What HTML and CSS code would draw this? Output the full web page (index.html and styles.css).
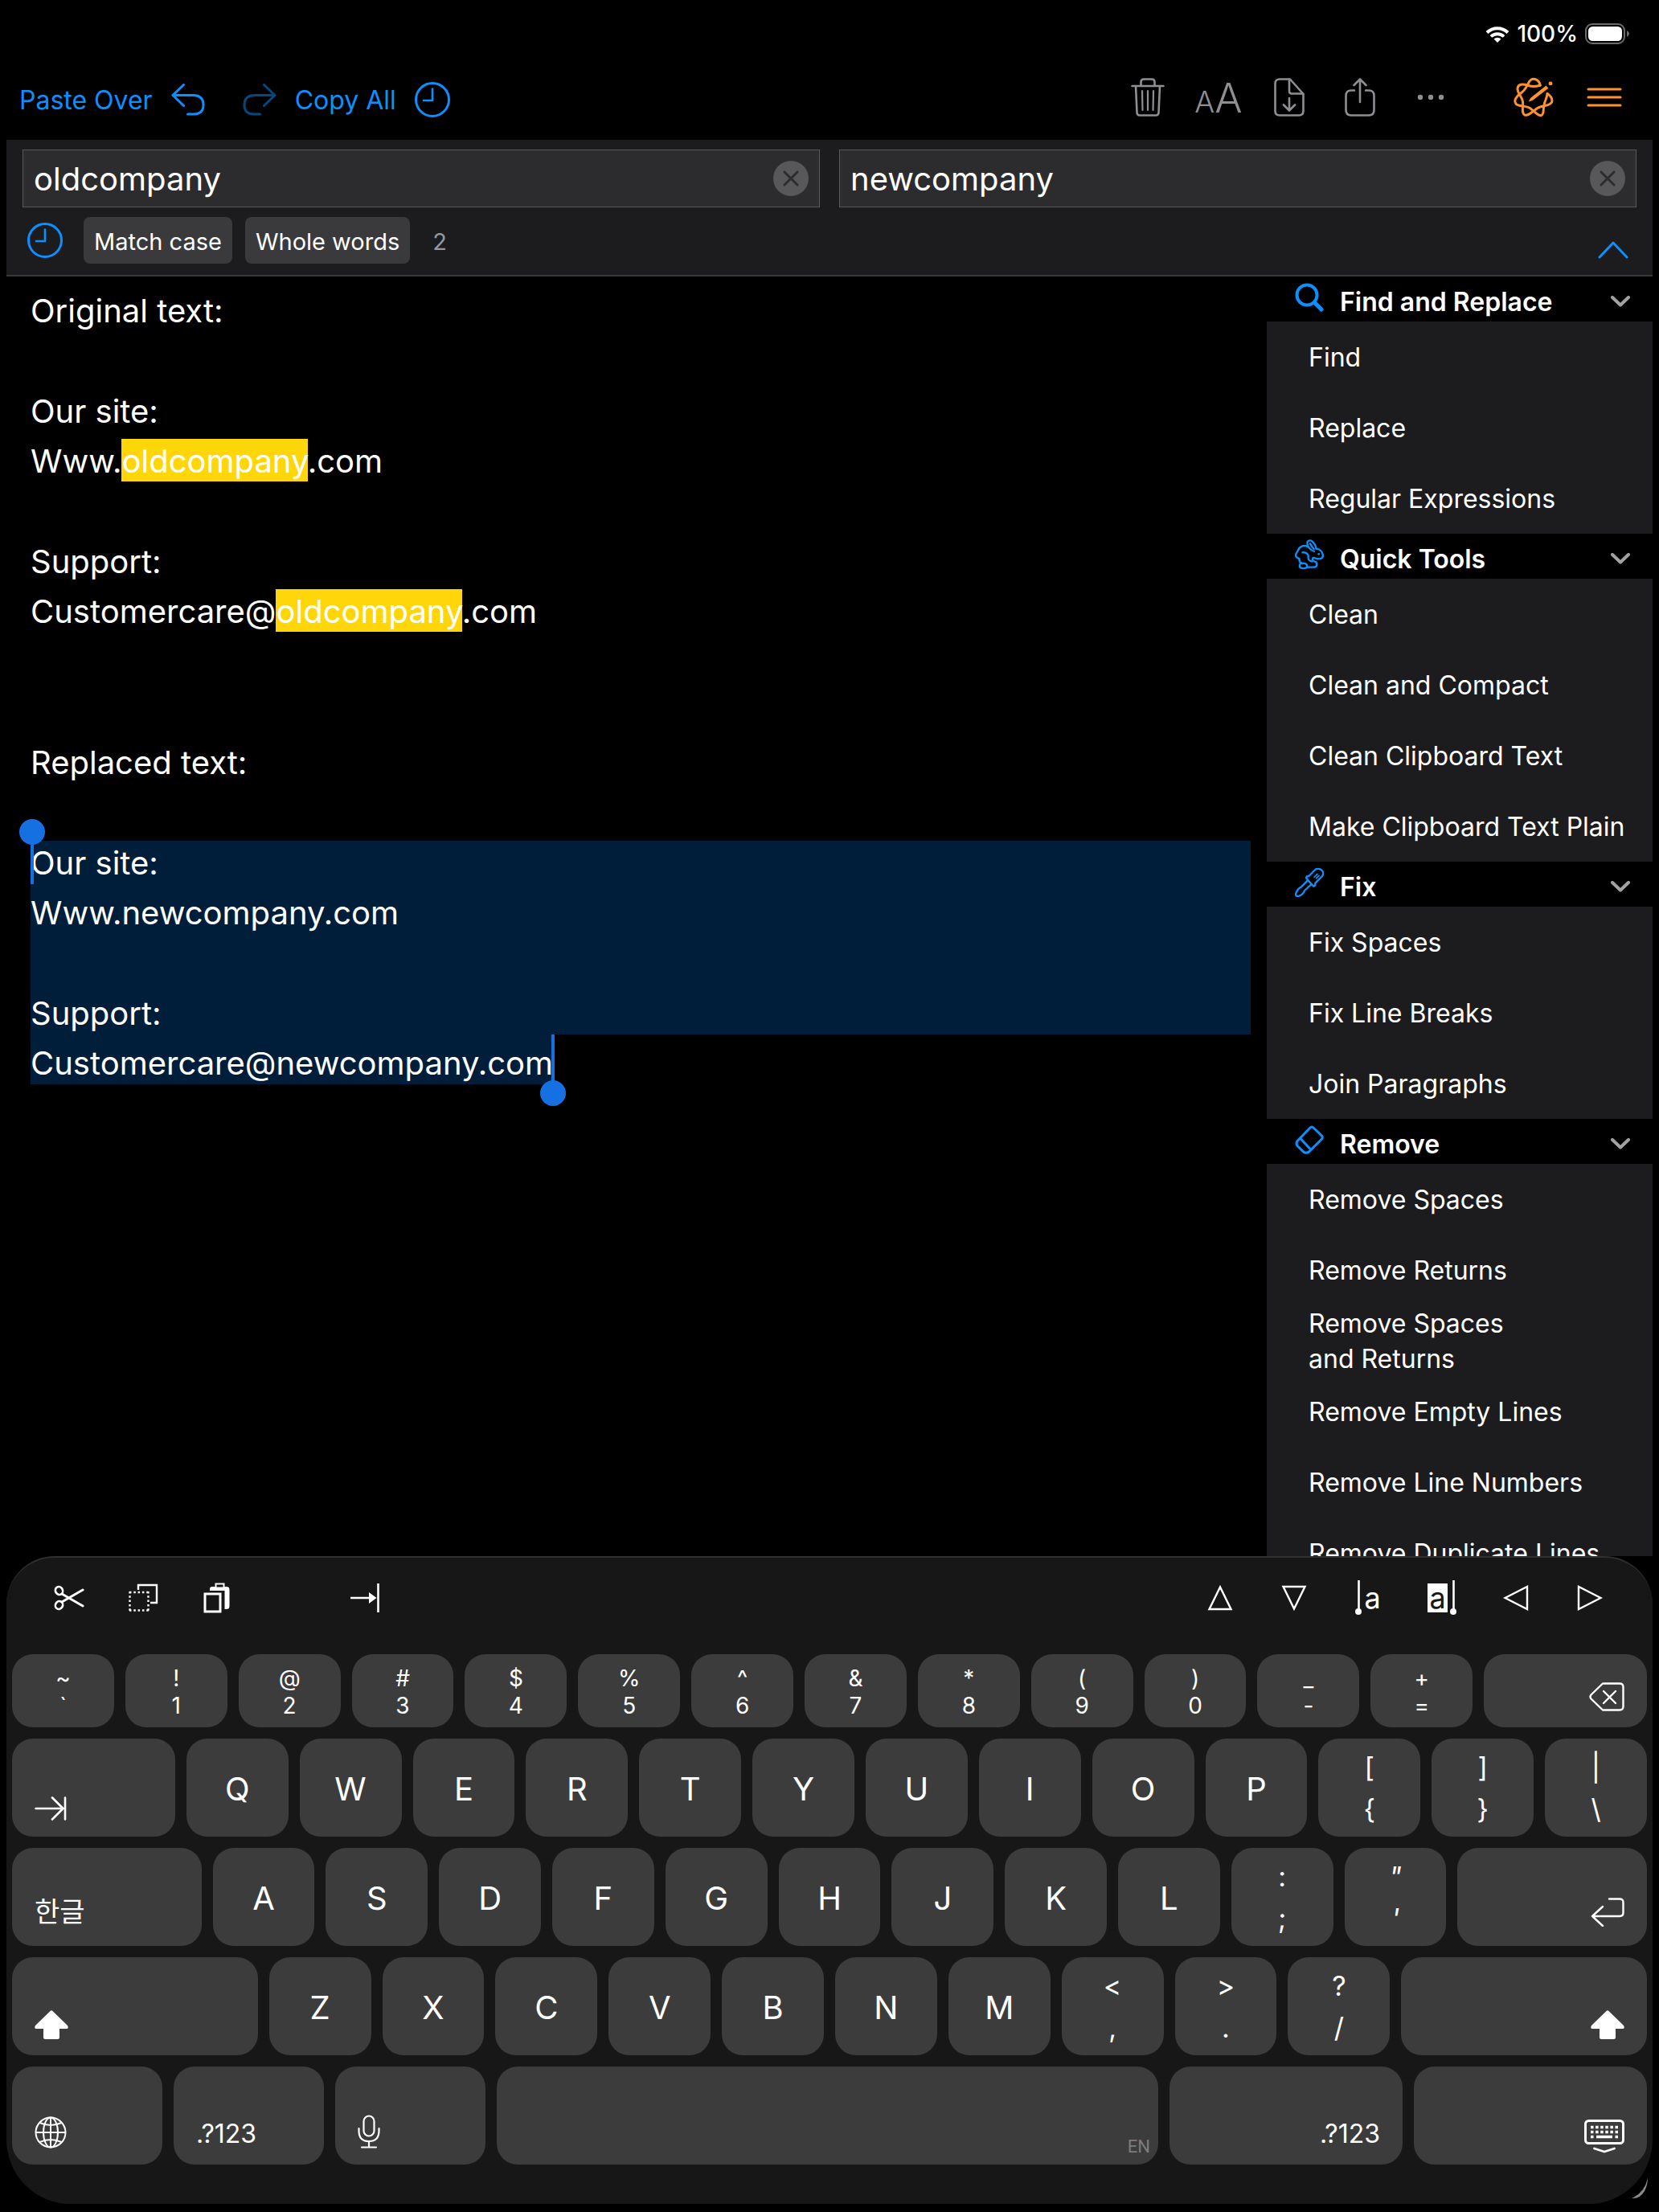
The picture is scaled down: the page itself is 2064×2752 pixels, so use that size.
FILE: index.html
```html
<!DOCTYPE html>
<html lang="en">
<head>
  <meta charset="UTF-8" />
  <meta name="viewport" content="width=device-width, initial-scale=1.0" />
  <title>Text Editor</title>
  <link rel="stylesheet" href="styles.css">
</head>
<body>
  <!-- shared icons -->
  <svg class="symbols" aria-hidden="true">
    <symbol id="clock" viewBox="0 0 44 44">
      <circle cx="22" cy="22" r="20.5" fill="none" stroke="currentColor" stroke-width="3" />
      <path d="M22 8.500V23H11" fill="none" stroke="currentColor" stroke-width="2.600" stroke-linecap="round" stroke-linejoin="round" />
    </symbol>
    <symbol id="clear" viewBox="0 0 44 44">
      <circle cx="22" cy="22" r="22" fill="#58585a" />
      <path d="M14 14L30 30M30 14L14 30" stroke="#2c2c2e" stroke-width="3" stroke-linecap="round" />
    </symbol>
    <symbol id="chevron" viewBox="0 0 24 14">
      <path d="M2 2L12 11.500L22 2" fill="none" stroke="#a2a2a4" stroke-width="4" stroke-linecap="round" stroke-linejoin="round" />
    </symbol>
    <symbol id="shift" viewBox="0 0 42 36">
      <path d="M19.500 1Q21 -0.500 22.500 1L41 19Q43 23 39.500 23H31V33.500Q31 36 28.500 36H13.500Q11 36 11 33.500V23H2.500Q-1 23 1 19Z" fill="#fff" />
    </symbol>
  </svg>

  <div class="status-bar">
    <svg width="30" height="21" viewBox="0 0 30 21">
      <path d="M2 8.500A18.500 18.500 0 0 1 28 8.500" fill="none" stroke="#fff" stroke-width="4" />
      <path d="M7 13.500A11.500 11.500 0 0 1 23 13.500" fill="none" stroke="#fff" stroke-width="3.800" />
      <path d="M10.500 16.500A6.500 6.500 0 0 1 19.500 16.500L15 21Z" fill="#fff" />
    </svg>
    <span>100%</span>
    <svg width="56" height="26" viewBox="0 0 56 26">
      <rect x="1" y="1" width="48" height="24" rx="8" fill="none" stroke="#6c6c6c" stroke-width="2" />
      <rect x="4" y="4" width="42" height="18" rx="5.500" fill="#fff" />
      <path d="M52 9Q55 10.500 55 13T52 17Z" fill="#6c6c6c" />
    </svg>
  </div>

  <header class="toolbar">
    <div class="toolbar-left">
      <button class="text-button">Paste Over</button>
      <button class="undo" aria-label="Undo">
        <svg width="42" height="40" viewBox="0 0 42 40" fill="none" stroke="currentColor" stroke-width="3" stroke-linecap="round" stroke-linejoin="round">
          <path d="M15.500 1.500L2 14.500L15.500 27.500M2 14.500H27Q40 14.500 40 26.500T27 38H20.500" />
        </svg>
      </button>
      <button class="redo" aria-label="Redo">
        <svg width="42" height="40" viewBox="0 0 42 40" fill="none" stroke="currentColor" stroke-width="3" stroke-linecap="round" stroke-linejoin="round">
          <path d="M26.500 1.500L40 14.500L26.500 27.500M40 14.500H15Q2 14.500 2 26.500T15 38H21.500" />
        </svg>
      </button>
      <button class="text-button">Copy All</button>
      <button aria-label="History"><svg width="44" height="44"><use href="#clock" /></svg></button>
    </div>
    <div class="toolbar-right">
      <button class="tool" aria-label="Delete">
        <svg width="42" height="48" viewBox="0 0 42 48" fill="none" stroke="currentColor" stroke-width="2.6" stroke-linecap="round" stroke-linejoin="round">
          <path d="M1.500 10H40.500M12.500 10V5Q12.500 1.500 16 1.500H26Q29.500 1.500 29.500 5V10M6 10L7.500 43Q7.700 46.500 11 46.500H31Q34.300 46.500 34.500 43L36 10" />
          <path d="M14 16L14.500 40M21 16V40M28 16L27.500 40" stroke-width="2.200" />
        </svg>
      </button>
      <button class="tool text-size" aria-label="Text size"><span class="small-a">A</span><span class="big-a">A</span></button>
      <button class="tool" aria-label="Download">
        <svg width="38" height="48" viewBox="0 0 38 48" fill="none" stroke="currentColor" stroke-width="2.6" stroke-linecap="round" stroke-linejoin="round">
          <path d="M19 1.500H7Q1.500 1.500 1.500 7V41Q1.500 46.500 7 46.500H31Q36.500 46.500 36.500 41V20L20 1.500Z" />
          <path d="M19 2V16.500Q19 19.500 22 19.500H36M19 25V40M12 33.500L19 40.500L26 33.500" />
        </svg>
      </button>
      <button class="tool" aria-label="Share">
        <svg width="38" height="48" viewBox="0 0 38 48" fill="none" stroke="currentColor" stroke-width="2.6" stroke-linecap="round" stroke-linejoin="round">
          <path d="M12 15.500H8Q1.500 15.500 1.500 22V40Q1.500 46.500 8 46.500H30Q36.500 46.500 36.500 40V22Q36.500 15.500 30 15.500H26" />
          <path d="M19 30V1.500M11.500 9L19 1.500L26.500 9" />
        </svg>
      </button>
      <button class="tool" aria-label="More">
        <svg width="36" height="8" viewBox="0 0 36 8" fill="currentColor"><circle cx="5" cy="4" r="3.2" /><circle cx="18" cy="4" r="3.2" /><circle cx="31" cy="4" r="3.2" /></svg>
      </button>
      <button class="tool accent edit" aria-label="Edit tools">
        <svg width="50" height="50" viewBox="-4 -4 152 152" fill="none" stroke="currentColor" stroke-width="9" stroke-linecap="round" stroke-linejoin="round">
          <path d="M97 27C94 8 70 -8 56 12C46 28 44 42 24 56C4 70 -4 86 6 98C18 108 45 102 62 116C76 126 88 143 101 141C113 137 107 116 112 98C115 86 122 76 124 58" />
          <path d="M97 27C80 31 64 34 50 27C28 20 12 22 11 40C12 60 28 68 31 88C34 108 24 130 38 139C55 145 72 120 90 111C110 102 132 106 141 90C144 78 136 66 124 58" />
          <path d="M53 89L60 75L119 28L128 38L68 84Z" fill="currentColor" stroke="none" />
          <circle cx="136" cy="20" r="7.5" fill="currentColor" stroke="none" />
        </svg>
      </button>
      <button class="tool accent" aria-label="Menu">
        <svg width="44" height="24" viewBox="0 0 44 24" fill="none" stroke="currentColor" stroke-width="3" stroke-linecap="round"><path d="M2 2H42M2 12H42M2 22H42" /></svg>
      </button>
    </div>
  </header>

  <form class="find-panel" onsubmit="return false">
    <div class="fields">
      <div class="field">
        <input type="text" aria-label="Find" value="oldcompany" />
        <button type="button" aria-label="Clear find"><svg width="44" height="44"><use href="#clear" /></svg></button>
      </div>
      <div class="field">
        <input type="text" aria-label="Replace" value="newcompany" />
        <button type="button" aria-label="Clear replace"><svg width="44" height="44"><use href="#clear" /></svg></button>
      </div>
    </div>
    <div class="options">
      <button type="button" class="history" aria-label="Search history"><svg width="44" height="44"><use href="#clock" /></svg></button>
      <button type="button" class="option">Match case</button>
      <button type="button" class="option">Whole words</button>
      <output class="count">2</output>
      <button type="button" class="collapse" aria-label="Collapse">
        <svg width="38" height="22" viewBox="0 0 38 22" fill="none" stroke="currentColor" stroke-width="3" stroke-linecap="round" stroke-linejoin="round"><path d="M2 20L19 2L36 20" /></svg>
      </button>
    </div>
  </form>

  <main class="main">
    <div class="editor" role="textbox" aria-multiline="true" aria-label="Text">
      <div class="line">Original text:</div>
      <div class="line blank"></div>
      <div class="line">Our site:</div>
      <div class="line">Www.<mark>oldcompany</mark>.com</div>
      <div class="line blank"></div>
      <div class="line">Support:</div>
      <div class="line">Customercare@<mark>oldcompany</mark>.com</div>
      <div class="line blank"></div>
      <div class="line blank"></div>
      <div class="line">Replaced text:</div>
      <div class="line blank"></div>
      <div class="selection">
        <div class="selected-block">
          <div class="line">Our site:</div>
          <div class="line">Www.newcompany.com</div>
          <div class="line blank"></div>
          <div class="line">Support:</div>
        </div>
        <div class="line selected-last">Customercare@newcompany.com</div>
      </div>
    </div>

    <aside class="sidebar">
      <button class="section-title">
        <svg width="36" height="36" viewBox="0 0 36 36" fill="none" stroke="currentColor" stroke-linecap="round"><circle cx="15" cy="15" r="12.500" stroke-width="4" /><path d="M24.500 24.500L33 33" stroke-width="5" /></svg>
        <span>Find and Replace</span>
        <svg class="chevron" width="24" height="14"><use href="#chevron" /></svg>
      </button>
      <button class="item">Find</button>
      <button class="item">Replace</button>
      <button class="item">Regular Expressions</button>

      <button class="section-title">
        <svg width="36" height="38" viewBox="0 0 108 112" fill="none" stroke="currentColor" stroke-width="7" stroke-linecap="round" stroke-linejoin="round">
          <path d="M50 28C36 18 18 24 12 40C10 46 2 52 3 60C4 68 12 68 17 72C14 82 20 86 28 90" />
          <path d="M72 44C60 40 46 26 46 14C46 2 58 1 64 6C74 14 78 24 80 34M57 15C62 24 66 30 71 35" />
          <path d="M80 34C94 36 104 46 105 60C104 70 94 72 86 72C78 72 74 66 68 68C64 74 66 80 74 82C84 84 86 102 72 103H46" />
          <path d="M28 48C42 46 52 54 50 66C48 74 54 80 64 81" />
          <path d="M28 88C16 86 14 104 24 106C34 109 48 106 46 98C44 90 36 88 28 88Z" />
          <circle cx="89" cy="54" r="4" fill="currentColor" stroke="none" />
        </svg>
        <span>Quick Tools</span>
        <svg class="chevron" width="24" height="14"><use href="#chevron" /></svg>
      </button>
      <button class="item">Clean</button>
      <button class="item">Clean and Compact</button>
      <button class="item">Clean Clipboard Text</button>
      <button class="item">Make Clipboard Text Plain</button>

      <button class="section-title">
        <svg width="36" height="36" viewBox="0 0 108 108" fill="none" stroke="currentColor" stroke-width="7" stroke-linecap="round" stroke-linejoin="round">
          <path d="M46 42L42 36L46 30L52 30L76 6C82 0 94 2 100 8C108 14 106 26 102 30L76 56V64L70 68L64 62Z" />
          <path d="M48 46L24 70C12 74 8 84 3 96C2 102 6 106 12 105C22 102 32 98 36 84L62 60" />
          <path d="M72 34L84 22M80 38L90 28" stroke-width="5" />
        </svg>
        <span>Fix</span>
        <svg class="chevron" width="24" height="14"><use href="#chevron" /></svg>
      </button>
      <button class="item">Fix Spaces</button>
      <button class="item">Fix Line Breaks</button>
      <button class="item">Join Paragraphs</button>

      <button class="section-title">
        <svg width="36" height="36" viewBox="0 0 36 36" fill="none" stroke="currentColor" stroke-width="3" stroke-linejoin="round">
          <path d="M19 3Q21 1 23 3L33.500 13Q35 15 33.500 17L18 32.500Q14 36 10 32.500L3.500 26Q0.500 22.500 3.500 19ZM6.500 16L19.500 30" />
        </svg>
        <span>Remove</span>
        <svg class="chevron" width="24" height="14"><use href="#chevron" /></svg>
      </button>
      <button class="item">Remove Spaces</button>
      <button class="item">Remove Returns</button>
      <button class="item">Remove Spaces<br />and Returns</button>
      <button class="item">Remove Empty Lines</button>
      <button class="item">Remove Line Numbers</button>
      <button class="item">Remove Duplicate Lines</button>
    </aside>
  </main>

  <section class="keyboard" aria-label="Keyboard">
    <div class="key-tools">
      <button aria-label="Cut">
        <svg width="38" height="32" viewBox="0 0 38 32" fill="none" stroke="#fff" stroke-width="2.6" stroke-linecap="round">
          <ellipse cx="6.500" cy="7" rx="4.500" ry="5" transform="rotate(-30 6.500 7)" /><ellipse cx="6.500" cy="25" rx="4.500" ry="5" transform="rotate(30 6.500 25)" />
          <path d="M10 11L36 26M10 21L36 6" stroke-width="3" />
        </svg>
      </button>
      <button aria-label="Copy">
        <svg width="38" height="36" viewBox="0 0 38 36" fill="none" stroke="#fff" stroke-width="2.4">
          <path d="M13 8V2H36V24H28" />
          <path d="M2 11H27M2 33.500H27M2.500 10V34M25.500 10V34" stroke-dasharray="2.500 2.800" />
        </svg>
      </button>
      <button aria-label="Paste">
        <svg width="34" height="38" viewBox="0 0 34 38" fill="none" stroke="#fff">
          <path d="M8 10V8Q8 5 11 5H29Q32.500 5 32.500 9V29Q32.500 33 29 33H26.500V10Z" fill="#fff" stroke="none" />
          <rect x="15.500" y="1.500" width="10" height="5" fill="#171717" stroke-width="2" />
          <rect x="2" y="14" width="19" height="22" fill="#171717" stroke-width="3" />
        </svg>
      </button>
      <button class="tab-tool" aria-label="Insert tab">
        <svg width="36" height="38" viewBox="0 0 36 38"><path d="M0 19H24M34.500 1V37" stroke="#fff" stroke-width="2.600" fill="none" /><path d="M23 12L32.500 19L23 26Z" fill="#fff" /></svg>
      </button>
      <span class="spacer"></span>
      <button aria-label="Up"><svg width="32" height="32" viewBox="0 0 32 32" fill="none" stroke="#fff" stroke-width="2.4"><path d="M16 2.500L29.500 30H2.500Z" /></svg></button>
      <button aria-label="Down"><svg width="32" height="32" viewBox="0 0 32 32" fill="none" stroke="#fff" stroke-width="2.4"><path d="M16 29.500L29.500 2H2.500Z" /></svg></button>
      <button class="caret-tool" aria-label="Select left"><svg width="8" height="44" viewBox="0 0 8 44"><path d="M4.500 0V38" stroke="#fff" stroke-width="2.600" /><circle cx="4" cy="39" r="4" fill="#fff" /></svg><span>a</span></button>
      <button class="caret-tool" aria-label="Select right"><span class="inverse">a</span><svg width="8" height="44" viewBox="0 0 8 44"><path d="M4.500 0V38" stroke="#fff" stroke-width="2.600" /><circle cx="4" cy="39" r="4" fill="#fff" /></svg></button>
      <button aria-label="Left"><svg width="32" height="32" viewBox="0 0 32 32" fill="none" stroke="#fff" stroke-width="2.4"><path d="M2.500 16L30 2V30Z" /></svg></button>
      <button aria-label="Right"><svg width="32" height="32" viewBox="0 0 32 32" fill="none" stroke="#fff" stroke-width="2.4"><path d="M29.500 16L2 2V30Z" /></svg></button>
    </div>

    <div class="row number-row">
      <button class="key"><span>~</span><span>`</span></button>
      <button class="key"><span>!</span><span>1</span></button>
      <button class="key"><span>@</span><span>2</span></button>
      <button class="key"><span>#</span><span>3</span></button>
      <button class="key"><span>$</span><span>4</span></button>
      <button class="key"><span>%</span><span>5</span></button>
      <button class="key"><span>^</span><span>6</span></button>
      <button class="key"><span>&amp;</span><span>7</span></button>
      <button class="key"><span>*</span><span>8</span></button>
      <button class="key"><span>(</span><span>9</span></button>
      <button class="key"><span>)</span><span>0</span></button>
      <button class="key"><span>_</span><span>-</span></button>
      <button class="key"><span>+</span><span>=</span></button>
      <button class="key tab right" aria-label="Backspace">
        <svg width="44" height="36" viewBox="0 0 44 36" fill="none" stroke="#fff" stroke-width="2.4" stroke-linecap="round" stroke-linejoin="round"><path d="M17 1.500H38Q42.500 1.500 42.500 6V30Q42.500 34.500 38 34.500H17L2.500 20.500Q0.500 18 2.500 15.500ZM18 11L33 26M33 11L18 26" /></svg>
      </button>
    </div>
    <div class="row">
      <button class="key tab left" aria-label="Tab">
        <svg width="40" height="30" viewBox="0 0 40 30" fill="none" stroke="#fff" stroke-width="2.6" stroke-linecap="round" stroke-linejoin="round"><path d="M1.500 15H35.500M22 1.500L35.500 15L22 28.500M38 1.500V28.500" /></svg>
      </button>
      <button class="key">Q</button>
      <button class="key">W</button>
      <button class="key">E</button>
      <button class="key">R</button>
      <button class="key">T</button>
      <button class="key">Y</button>
      <button class="key">U</button>
      <button class="key">I</button>
      <button class="key">O</button>
      <button class="key">P</button>
      <button class="key pair"><span>[</span><span>{</span></button>
      <button class="key pair"><span>]</span><span>}</span></button>
      <button class="key pair"><span>|</span><span>\</span></button>
    </div>
    <div class="row">
      <button class="key caps left"><span class="hangul" lang="ko">한글</span></button>
      <button class="key">A</button>
      <button class="key">S</button>
      <button class="key">D</button>
      <button class="key">F</button>
      <button class="key">G</button>
      <button class="key">H</button>
      <button class="key">J</button>
      <button class="key">K</button>
      <button class="key">L</button>
      <button class="key pair"><span>:</span><span>;</span></button>
      <button class="key pair"><i>"</i><i>'</i></button>
      <button class="key caps right" aria-label="Return">
        <svg width="42" height="36" viewBox="0 0 42 36" fill="none" stroke="#fff" stroke-width="2.4" stroke-linecap="round" stroke-linejoin="round"><path d="M23 1.500H36Q40.500 1.500 40.500 6V19Q40.500 23 36 23H2M15 11L2 23L15 35" /></svg>
      </button>
    </div>
    <div class="row">
      <button class="key shift left" aria-label="Shift"><svg width="42" height="36"><use href="#shift" /></svg></button>
      <button class="key">Z</button>
      <button class="key">X</button>
      <button class="key">C</button>
      <button class="key">V</button>
      <button class="key">B</button>
      <button class="key">N</button>
      <button class="key">M</button>
      <button class="key pair"><span>&lt;</span><span>,</span></button>
      <button class="key pair"><span>&gt;</span><span>.</span></button>
      <button class="key pair"><span>?</span><span>/</span></button>
      <button class="key shift right" aria-label="Right shift"><svg width="42" height="36"><use href="#shift" /></svg></button>
    </div>
    <div class="row">
      <button class="key fn left" aria-label="Next keyboard">
        <svg width="40" height="40" viewBox="0 0 40 40" fill="none" stroke="#fff" stroke-width="2"><circle cx="20" cy="20" r="18.500" /><ellipse cx="20" cy="20" rx="9" ry="18.500" /><path d="M20 1.500V38.500M1.500 20H38.500M6.500 8Q20 14 33.500 8M6.500 32Q20 26 33.500 32" /></svg>
      </button>
      <button class="key fn left"><span class="mode">.?123</span></button>
      <button class="key fn left" aria-label="Dictate">
        <svg width="28" height="42" viewBox="0 0 28 42" fill="none" stroke="#fff" stroke-width="2.2" stroke-linecap="round"><rect x="7.500" y="1.500" width="13" height="25" rx="6.500" /><path d="M1.500 17V20Q1.500 33 14 33T26.500 20V17M14 33V40.500M5 40.500H23" /></svg>
      </button>
      <button class="key space right" aria-label="Space"><span class="lang">EN</span></button>
      <button class="key mode-right right"><span class="mode">.?123</span></button>
      <button class="key mode-right right" aria-label="Hide keyboard">
        <svg class="hide-icon" width="50" height="42" viewBox="0 0 50 42" fill="none" stroke="#fff" stroke-linecap="round" stroke-linejoin="round">
          <rect x="1.500" y="1.500" width="47" height="28" rx="4" stroke-width="3" />
          <path d="M8 9.500H42M8 15.500H42" stroke-width="3.400" stroke-linecap="butt" stroke-dasharray="3.500 2.600" />
          <path d="M8 21.500H11.500M15 21.500H35M38.500 21.500H42" stroke-width="3.400" stroke-linecap="butt" />
          <path d="M12.500 36L25 40L37.500 36" stroke-width="2.800" />
        </svg>
      </button>
    </div>
    <svg class="corner" width="24" height="30" viewBox="0 0 24 30"><path d="M22 2Q18 20 2 27Q12 28 18 18Q22 10 22 2Z" fill="#8a8a8a" /></svg>
  </section>
</body>
</html>
```
FILE: styles.css
```css
* {
  box-sizing: border-box;
}

body {
  margin: 0;
  padding: 0 8px;
  height: 100vh;
  display: flex;
  flex-direction: column;
  overflow: hidden;
  background-color: #000;
  color: #fff;
  font-family: Inter, "Liberation Sans", sans-serif;
}

button {
  display: flex;
  align-items: center;
  padding: 0;
  border: none;
  background: none;
  color: inherit;
  font-family: inherit;
  cursor: pointer;
}

svg {
  display: block;
  flex-shrink: 0;
}

.symbols {
  position: absolute;
  width: 0;
  height: 0;
}

/* status bar */
.status-bar {
  display: flex;
  justify-content: flex-end;
  align-items: center;
  gap: 9px;
  height: 84px;
  padding-right: 28px;
  font-size: 28px;
  font-weight: 500;
}

/* top toolbar */
.toolbar {
  display: flex;
  justify-content: space-between;
  height: 90px;
  padding: 0 16px;
}

.toolbar-left,
.toolbar-right {
  display: flex;
  align-items: center;
  height: 80px;
}

.toolbar-left {
  gap: 23px;
  color: #0a91ff;
}

.toolbar-right {
  height: 74px;
}

.text-button {
  font-size: 32px;
}

.undo {
  margin-right: 24px;
}

.redo {
  color: #04497f;
}

.tool {
  justify-content: center;
  width: 88px;
  height: 74px;
  color: #8e8e93;
}

.text-size {
  align-items: baseline;
  font-weight: 300;
  line-height: 76px;
}

.small-a {
  font-size: 37px;
}

.big-a {
  font-size: 51px;
}

.accent {
  color: #ff9230;
}

.edit {
  margin-left: 40px;
}

/* find and replace panel */
.find-panel {
  padding: 12px 20px 14px;
  background-color: #1c1c1e;
  border-bottom: 2px solid #38383a;
}

.fields {
  display: flex;
  gap: 24px;
}

.field {
  flex: 1;
  display: flex;
  align-items: center;
  height: 72px;
  padding: 0 13px;
  background-color: #2c2c2e;
  border: 1px solid #58585a;
}

.field input {
  flex: 1;
  min-width: 0;
  padding: 0;
  border: none;
  outline: none;
  background: none;
  color: #fff;
  font-family: inherit;
  font-size: 40px;
}

.options {
  display: flex;
  align-items: center;
  gap: 16px;
  margin-top: 12px;
}

.history {
  margin: 0 10px 0 6px;
  color: #0a91ff;
}

.option {
  height: 58px;
  padding: 2px 13px 0;
  border-radius: 8px;
  background-color: #3a3a3c;
  font-size: 29px;
}

.count {
  margin: 2px 0 0 12px;
  color: #98989c;
  font-size: 29px;
}

.collapse {
  align-self: flex-end;
  margin: 0 10px 6px auto;
  color: #0a91ff;
}

/* editor */
.main {
  flex: 1;
  min-height: 0;
  display: flex;
  overflow: hidden;
}

.editor {
  flex: 1;
  padding: 7px 20px 0 30px;
  font-size: 40px;
}

.line {
  height: 62px;
  padding-top: 9px;
  line-height: 54px;
}

.blank {
  height: 63px;
}

mark {
  padding: 3px 0 1px;
  background-color: #ffd60a;
  color: #fff;
}

.selection {
  margin-top: 8px;
}

.selected-block,
.selected-last {
  position: relative;
  background-color: #001e3a;
}

.selected-block .line:first-child {
  height: 54px;
  padding-top: 1px;
}

.selected-last {
  width: fit-content;
}

/* drag handles of the selection */
.selected-block::before,
.selected-block::after,
.selected-last::before,
.selected-last::after {
  content: "";
  position: absolute;
  background-color: #1571e2;
}

.selected-block::before {
  left: 0;
  top: 0;
  width: 4px;
  height: 54px;
}

.selected-block::after {
  left: -14px;
  top: -27px;
  width: 32px;
  height: 32px;
  border-radius: 50%;
}

.selected-last::before {
  right: -2px;
  top: 0;
  width: 4px;
  height: 62px;
}

.selected-last::after {
  right: -16px;
  bottom: -27px;
  width: 32px;
  height: 32px;
  border-radius: 50%;
}

/* tools list */
.sidebar {
  width: 480px;
  background-color: #1c1c1e;
}

.section-title {
  width: 100%;
  height: 56px;
  padding: 2px 28px 0 35px;
  background-color: #000;
  font-size: 32px;
  font-weight: 600;
}

.section-title svg:first-child {
  margin-bottom: 6px;
  color: #0a91ff;
}

.section-title span {
  margin: 4px 0 0 20px;
}

.section-title .chevron {
  margin: 4px 0 0 auto;
}

.item {
  width: 100%;
  height: 88px;
  padding: 2px 0 0 52px;
  font-size: 32px;
  line-height: 44px;
  text-align: left;
  white-space: nowrap;
}

/* on-screen keyboard */
.keyboard {
  position: relative;
  display: flex;
  flex-direction: column;
  gap: 14px;
  margin-bottom: 10px;
  padding: 0 7px 49px;
  border-top: 2px solid #303030;
  border-radius: 60px 60px 80px 80px;
  background-color: #171717;
}

.key-tools {
  display: flex;
  height: 106px;
  padding: 0 25px 6px;
}

.key-tools button {
  justify-content: center;
  width: 92px;
}

.key-tools .tab-tool {
  margin-left: 92px;
}

.spacer {
  flex: 1;
}

.key-tools .caret-tool {
  gap: 3px;
  font-size: 36px;
  line-height: 36px;
}

.caret-tool .inverse {
  padding: 0 2px;
  background-color: #fff;
  color: #171717;
}

.row {
  display: flex;
  gap: 14px;
  height: 122px;
}

.number-row {
  height: 91px;
}

.key {
  flex: 127 0 0;
  justify-content: center;
  padding-top: 2px;
  border-radius: 26px;
  background-color: #3c3c3c;
  font-size: 40px;
}

.number-row .key {
  flex-direction: column;
  font-size: 28px;
  line-height: 34px;
}

.pair {
  flex-direction: column;
  font-size: 34px;
  line-height: 52px;
}

.tab {
  flex-grow: 203;
}

.caps {
  flex-grow: 236;
}

.shift {
  flex-grow: 306;
}

.fn {
  flex-grow: 187;
}

.space {
  flex-grow: 823;
}

.mode-right {
  flex-grow: 290;
}

/* wide keys carry their label in a bottom corner */
.row .left,
.row .right {
  flex-direction: row;
  align-items: flex-end;
}

.row .left {
  justify-content: flex-start;
}

.row .right {
  justify-content: flex-end;
}

.left > *,
.right > * {
  margin: 0 28px 20px;
}

.caps > * {
  margin-bottom: 24px;
}

.right .hide-icon {
  margin-bottom: 14px;
}

.mode {
  font-size: 32px;
  line-height: 36px;
}

.hangul {
  font-family: "Noto Sans CJK KR", sans-serif;
  font-size: 34px;
  line-height: 40px;
}

.space .lang {
  margin: 0 10px 10px;
  color: #7c7c7c;
  font-family: Roboto, sans-serif;
  font-size: 22px;
}

.corner {
  position: absolute;
  right: 4px;
  bottom: 4px;
}
```
